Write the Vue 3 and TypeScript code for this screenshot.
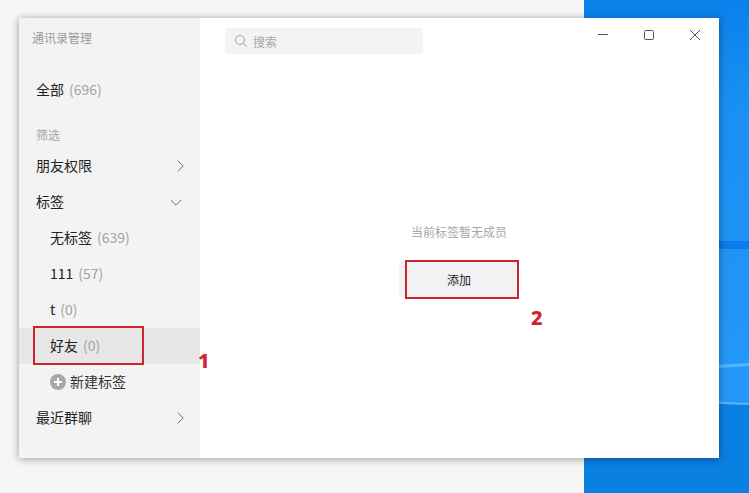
<script setup lang="ts">
interface Row { label: string; count?: string; cls: string; arrow?: 'right' | 'down' }
const rows: Row[] = [
  { label: '朋友权限', cls: 'top', arrow: 'right' },
  { label: '标签', cls: 'top', arrow: 'down' },
  { label: '无标签', count: '(639)', cls: 'sub' },
  { label: '111', count: '(57)', cls: 'sub' },
  { label: 't', count: '(0)', cls: 'sub' },
  { label: '好友', count: '(0)', cls: 'sub selected' },
]
</script>

<template>
  <div class="screen">
    <div class="behind"></div>
    <svg class="desktop" width="165" height="493" viewBox="0 0 165 493">
      <defs>
        <linearGradient id="sky" x1="0" y1="0" x2="0" y2="1">
          <stop offset="0" stop-color="#0a80ea" />
          <stop offset="0.2" stop-color="#1a8ff2" />
          <stop offset="0.75" stop-color="#2498f8" />
          <stop offset="1" stop-color="#2498f8" />
        </linearGradient>
      </defs>
      <rect width="165" height="493" fill="url(#sky)" />
      <rect y="241" width="165" height="8" fill="#0b7cea" />
      <path d="M0 398 L165 404 L165 493 L0 493 Z" fill="#0a80e2" />
      <path d="M0 373 L165 363 L165 366 L0 376 Z" fill="#55b6fb" />
      <path d="M0 396 L165 403 L165 405 L0 399 Z" fill="#55b6fb" />
    </svg>

    <section class="window">
      <aside class="side">
        <div class="title">通讯录管理</div>
        <div class="row all"><span>全部</span><span class="count">(696)</span></div>
        <div class="filter">筛选</div>
        <div v-for="r in rows" :key="r.label" class="row" :class="r.cls">
          <span>{{ r.label }}</span>
          <span v-if="r.count" class="count">{{ r.count }}</span>
          <svg v-if="r.arrow === 'right'" class="arrow" width="7" height="12" viewBox="0 0 7 12">
            <path d="M0.8 0.6 L6.2 6 L0.8 11.4" fill="none" stroke="#707070" stroke-width="1" />
          </svg>
          <svg v-if="r.arrow === 'down'" class="arrow down" width="12" height="7" viewBox="0 0 12 7">
            <path d="M0.6 0.8 L6 6.2 L11.4 0.8" fill="none" stroke="#707070" stroke-width="1" />
          </svg>
        </div>
        <div class="row sub newtag">
          <svg width="16" height="16" viewBox="0 0 16 16">
            <circle cx="8" cy="8" r="8" fill="#a8a8a8" />
            <path d="M8 4 V12 M4 8 H12" stroke="#fff" stroke-width="2" />
          </svg>
          <span>新建标签</span>
        </div>
        <div class="row top">
          <span>最近群聊</span>
          <svg class="arrow" width="7" height="12" viewBox="0 0 7 12">
            <path d="M0.8 0.6 L6.2 6 L0.8 11.4" fill="none" stroke="#707070" stroke-width="1" />
          </svg>
        </div>
      </aside>

      <main class="main">
        <header class="head">
          <div class="search">
            <svg width="14" height="14" viewBox="0 0 14 14">
              <circle cx="6" cy="6" r="4.5" fill="none" stroke="#a6a6a6" stroke-width="1" />
              <path d="M9.4 9.4 L13 13" stroke="#a6a6a6" stroke-width="1" />
            </svg>
            <span>搜索</span>
          </div>
          <div class="controls">
            <svg width="12" height="12" viewBox="0 0 12 12"><path d="M1 5.5 H11" stroke="#555" stroke-width="1" /></svg>
            <svg width="12" height="12" viewBox="0 0 12 12"><rect x="1.5" y="1.5" width="9" height="9" rx="1" fill="none" stroke="#555" stroke-width="1" /></svg>
            <svg width="12" height="12" viewBox="0 0 12 12"><path d="M1 1 L11 11 M11 1 L1 11" stroke="#555" stroke-width="1" /></svg>
          </div>
        </header>
        <div class="empty">
          <p>当前标签暂无成员</p>
          <button type="button">添加</button>
        </div>
      </main>
    </section>

    <div class="mark box1"></div>
    <div class="mark box2"></div>
    <span class="num n1">1</span>
    <span class="num n2">2</span>
  </div>
</template>

<style>
html, body { margin: 0; overflow: hidden; }
</style>

<style scoped>
.screen {
  position: relative;
  width: 749px;
  height: 493px;
  display: flex;
  overflow: hidden;
  font-family: "Noto Sans CJK SC", "Liberation Sans", sans-serif;
}
.behind { width: 584px; background: #f6f6f6; box-shadow: 0 0 3px rgba(0,0,0,.25); }
.desktop { display: block; flex: none; }
.window {
  position: absolute;
  left: 19px;
  top: 18px;
  width: 700px;
  height: 440px;
  display: flex;
  background: #fff;
  box-shadow: 0 1px 8px rgba(0,0,0,.38);
}
.side { width: 181px; flex: none; background: #f3f3f3; }
.title { padding: 12px 0 0 13px; height: 24px; font-size: 12px; line-height: 16px; color: #9a9a9a; }
.row {
  height: 36px;
  display: flex;
  align-items: center;
  gap: 5px;
  font-size: 14px;
  color: #222;
  padding-left: 17px;
  padding-right: 16px;
}
.row span { padding-bottom: 2px; }
.all { margin-top: 18px; }
.filter { padding: 19px 0 0 17px; height: 21px; font-size: 12px; line-height: 16px; color: #a6a6a6; }
.sub { padding-left: 31px; }
.selected { background: #e7e7e7; }
.row .count { color: #a3a3a3; }
.arrow { margin-left: auto; }
.arrow.down { margin-right: 2px; }
.newtag { gap: 4px; color: #333; }
.main { flex: 1; display: flex; flex-direction: column; min-width: 0; }
.head { display: flex; justify-content: space-between; padding: 10px 18px 0 25px; }
.search {
  width: 198px;
  height: 26px;
  box-sizing: border-box;
  padding-left: 9px;
  display: flex;
  align-items: center;
  gap: 5px;
  background: #f3f3f3;
  border-radius: 4px;
  font-size: 12px;
  color: #a8a8a8;
}
.controls { display: flex; gap: 34px; align-items: flex-start; padding-top: 1px; }
.empty { display: flex; flex-direction: column; align-items: center; padding: 168px 0 0 0; margin-left: -1px; }
.empty p { margin: 0; font-size: 12px; line-height: 20px; color: #a6a6a6; }
button {
  margin-top: 19px;
  width: 120px;
  height: 36px;
  border: 0;
  border-radius: 4px;
  background: #f2f2f2;
  color: #222;
  font: inherit;
  font-size: 12px;
}
.mark { position: absolute; border: 2px solid #cb2530; box-sizing: border-box; }
.box1 { left: 33px; top: 326px; width: 111px; height: 39px; }
.box2 { left: 405px; top: 260px; width: 114px; height: 39px; }
.num {
  position: absolute;
  font-family: "Noto Sans", sans-serif;
  font-weight: 800;
  font-size: 20px;
  line-height: 24px;
  color: #d02530;
}
.n1 { left: 198px; top: 349px; }
.n2 { left: 531px; top: 306px; }
</style>
